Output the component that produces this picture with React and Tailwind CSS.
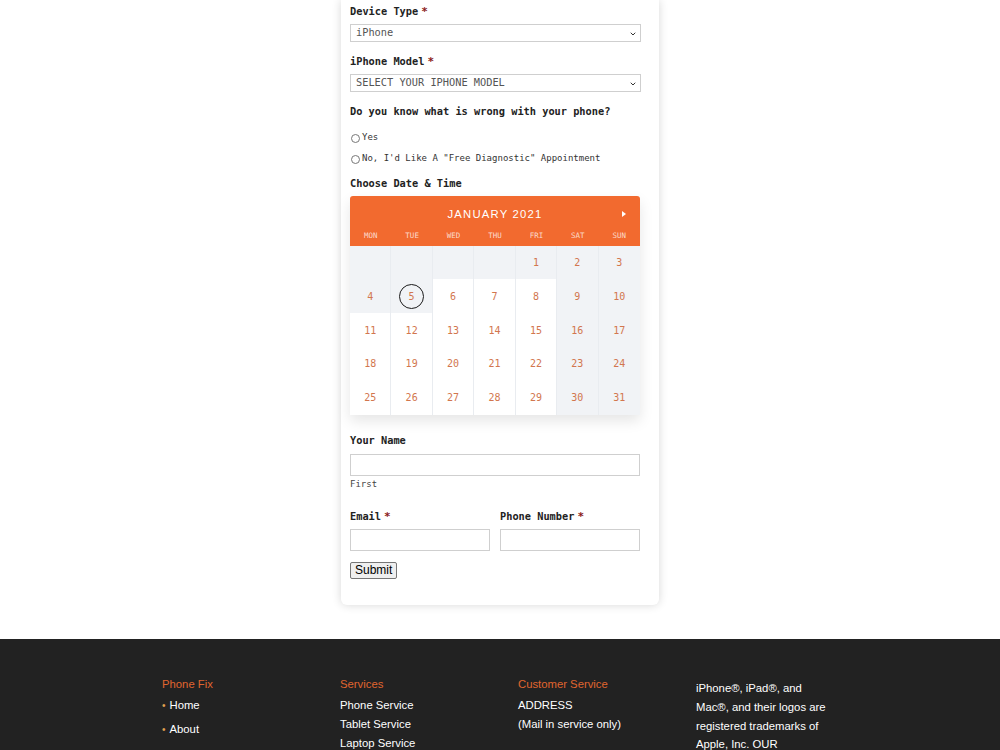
import { ChevronDown } from "lucide-react"

const mono = "font-['DejaVu_Sans_Mono',monospace]"
const sans = "font-['Liberation_Sans',Arial,sans-serif]"

const days = ["MON", "TUE", "WED", "THU", "FRI", "SAT", "SUN"]

// January 2021 starts on a Friday (Monday-first grid)
const cells = [
  null, null, null, null, 1, 2, 3,
  4, 5, 6, 7, 8, 9, 10,
  11, 12, 13, 14, 15, 16, 17,
  18, 19, 20, 21, 22, 23, 24,
  25, 26, 27, 28, 29, 30, 31,
]

function Label({ children, required }) {
  return (
    <div className="flex items-center gap-[3px] text-[10.3px] font-bold text-[#222] leading-none">
      {children}
      {required && <span className="text-[#8b1b1b] text-[11px]">*</span>}
    </div>
  )
}

function Select({ value }) {
  return (
    <div className="relative mt-[7px] h-[18px] w-[291px] border border-[#cfcfcf] bg-white flex items-center px-[5px] text-[10.3px] text-[#555]">
      {value}
      <ChevronDown className="absolute right-[3px] top-[5px] w-[8px] h-[8px] text-[#333]" strokeWidth={3} />
    </div>
  )
}

function Radio({ children }) {
  return (
    <label className="flex items-center gap-[2px] text-[9px] text-[#333] leading-none">
      <span className="w-[9px] h-[9px] rounded-full border border-[#777] bg-white mt-[2px]" />
      {children}
    </label>
  )
}

function Calendar() {
  return (
    <div className="mt-[7px] w-[290px] rounded-t-[3px] shadow-[0_6px_14px_rgba(0,0,0,0.10)]">
      <div className="bg-[#f26a2f] rounded-t-[3px]">
        <div className="relative h-[36px] flex items-center justify-center pt-[2px]">
          <span className={`${sans} text-[11.3px] tracking-[1.2px] text-white`}>JANUARY 2021</span>
          <span className="absolute right-[14px] top-[15px] w-0 h-0 border-y-[3px] border-y-transparent border-l-[4px] border-l-white" />
        </div>
        <div className="grid grid-cols-7 h-[14px] items-start">
          {days.map((d) => (
            <div key={d} className="text-center text-[7.5px] text-white/75 leading-none">{d}</div>
          ))}
        </div>
      </div>
      <div className="grid grid-cols-7">
        {cells.map((n, i) => {
          const col = i % 7
          const grey = n === null || n < 6 || col >= 5
          return (
            <div
              key={i}
              className={`h-[33.8px] flex items-center justify-center text-[10px] text-[#d2764e] ${col < 6 ? "border-r border-[#e9ecf0]" : ""} ${grey ? "bg-[#f1f3f6]" : "bg-white"}`}
            >
              {n === 5 ? (
                <span className="w-[25px] h-[25px] rounded-full border-[1.5px] border-[#1b1b1b] flex items-center justify-center">5</span>
              ) : (
                n
              )}
            </div>
          )
        })}
      </div>
    </div>
  )
}

function FooterCol({ title, children, width = "w-[178px]" }) {
  return (
    <div className={width}>
      <div className="text-[11.3px] text-[#e0652f] leading-none">{title}</div>
      <div className="mt-[5px] text-white text-[11.3px] leading-[19px]">{children}</div>
    </div>
  )
}

export default function App() {
  return (
    <div className={`min-h-screen bg-white ${mono}`}>
      {/* Booking form card */}
      <div className="mx-auto w-[318px] bg-white rounded-b-[6px] shadow-[0_0_10px_rgba(0,0,0,0.16)] px-[9px] pt-[6px] pb-[24px]">
        <Label required>Device Type</Label>
        <Select value="iPhone" />

        <div className="mt-[14px]">
          <Label required>iPhone Model</Label>
        </div>
        <Select value="SELECT YOUR IPHONE MODEL" />

        <div className="mt-[14px]">
          <Label>Do you know what is wrong with your phone?</Label>
        </div>
        <div className="mt-[16px] flex flex-col gap-[10px] pl-[1px]">
          <Radio>Yes</Radio>
          <Radio>No, I'd Like A "Free Diagnostic" Appointment</Radio>
        </div>

        <div className="mt-[14px]">
          <Label>Choose Date &amp; Time</Label>
        </div>
        <Calendar />

        <div className="mt-[20px]">
          <Label>Your Name</Label>
        </div>
        <div className="mt-[9px] h-[22px] w-[290px] border border-[#cfcfcf] bg-white" />
        <div className="mt-[4px] text-[9px] text-[#444] leading-none">First</div>

        <div className="mt-[22px] flex gap-[10px]">
          <div className="w-[140px]">
            <Label required>Email</Label>
            <div className="mt-[7px] h-[22px] border border-[#cfcfcf] bg-white" />
          </div>
          <div className="w-[140px]">
            <Label required>Phone Number</Label>
            <div className="mt-[7px] h-[22px] border border-[#cfcfcf] bg-white" />
          </div>
        </div>

        <button className={`${sans} mt-[11px] h-[17px] px-[4px] text-[12px] leading-none text-black bg-[#efefef] border border-[#767676] rounded-[2px]`}>
          Submit
        </button>
      </div>

      {/* Footer */}
      <footer className={`${sans} mt-[34px] bg-[#222222] pt-[40px] pb-[40px]`}>
        <div className="mx-auto w-[676px] flex">
          <FooterCol title="Phone Fix">
            <div className="flex flex-col gap-[5px]">
              <div className="flex items-center gap-[4px]"><span className="text-[#e0a050] text-[10px]">•</span>Home</div>
              <div className="flex items-center gap-[4px]"><span className="text-[#e0a050] text-[10px]">•</span>About</div>
            </div>
          </FooterCol>
          <FooterCol title="Services">
            <div>Phone Service</div>
            <div>Tablet Service</div>
            <div>Laptop Service</div>
          </FooterCol>
          <FooterCol title="Customer Service">
            <div>ADDRESS</div>
            <div>(Mail in service only)</div>
          </FooterCol>
          <div className="w-[134px] text-white text-[11.3px] leading-[18.7px]">
            iPhone®, iPad®, and Mac®, and their logos are registered trademarks of Apple, Inc. OUR
          </div>
        </div>
      </footer>
    </div>
  )
}
